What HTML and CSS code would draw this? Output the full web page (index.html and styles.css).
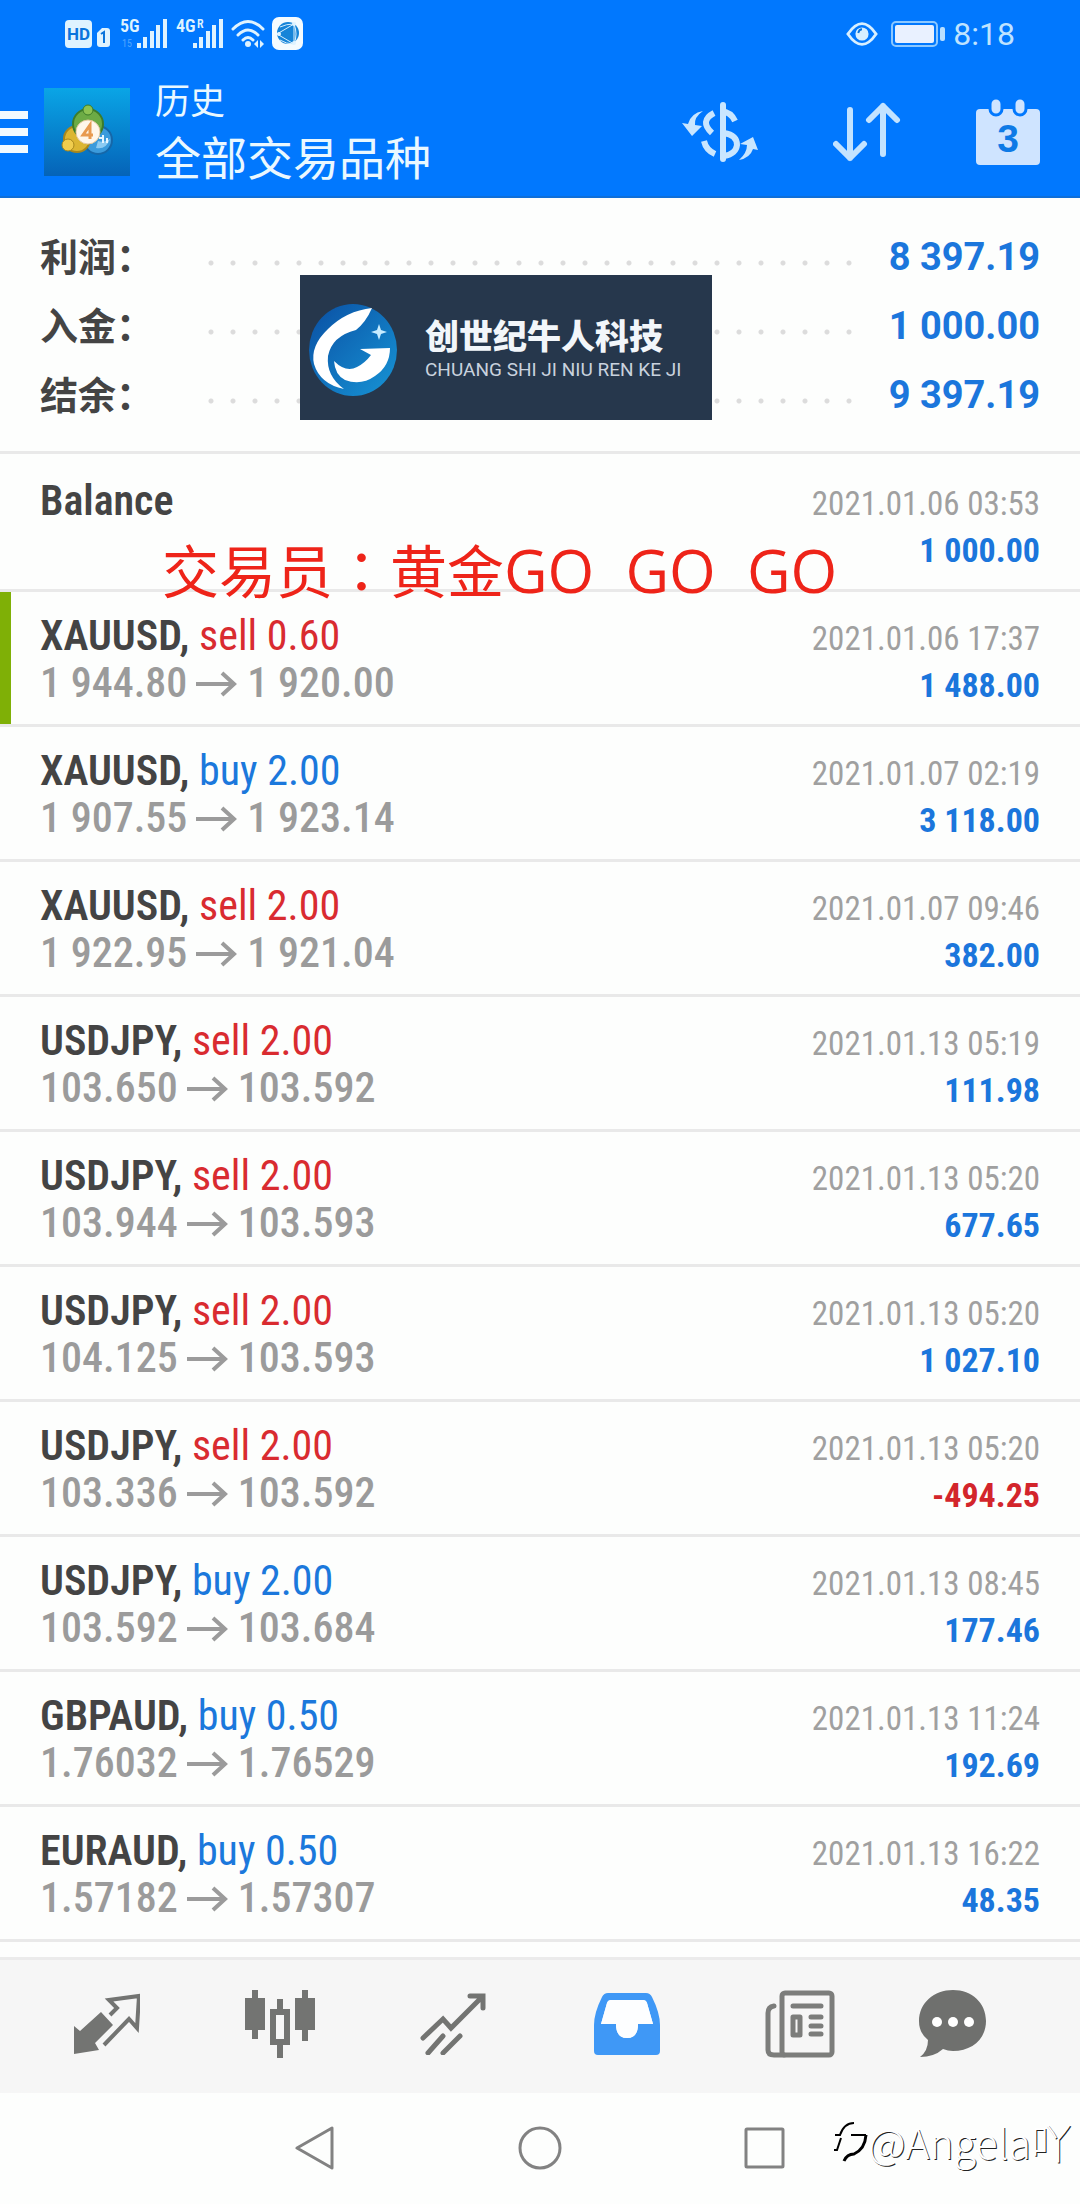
FILE: index.html
```html
<!DOCTYPE html>
<html lang="zh-CN">
<head>
<meta charset="utf-8">
<meta name="viewport" content="width=device-width, initial-scale=1">
<title>历史</title>
<link rel="stylesheet" href="styles.css">
</head>
<body>
<header class="top">
  <div class="status">
    <svg class="status-left" width="240" height="36" viewBox="65 16 240 36" fill="#dff3ff">
      <rect x="65" y="20" width="27" height="28" rx="4"/>
      <text x="67" y="40" font-size="17" font-weight="700" fill="#0a74dc">HD</text>
      <path d="M97 33l5-5h5q3 0 3 3v13q0 3-3 3h-7q-3 0-3-3z"/>
      <path d="M101 34l3-2v11" fill="none" stroke="#0a74dc" stroke-width="2"/>
      <text x="120" y="32" font-size="18" font-weight="600" class="cond">5G</text>
      <text x="122" y="47" font-size="10" class="cond" opacity=".35">15</text>
      <path d="M137 43h4v5h-4zM143 37h4v11h-4zM150 31h4v17h-4zM156 25h4v23h-4zM163 19h4v29h-4z"/>
      <text x="176" y="32" font-size="18" font-weight="600" class="cond">4G</text>
      <text x="197" y="28" font-size="12" font-weight="600" class="cond">R</text>
      <path d="M193 43h4v5h-4zM199 37h4v11h-4zM206 31h4v17h-4zM212 25h4v23h-4zM219 19h4v29h-4z"/>
      <path d="M233 29q15-15 30 0M238 35q10-10 20 0M243 40q5-5 10 0" fill="none" stroke="#dff3ff" stroke-width="3" stroke-linecap="round"/>
      <circle cx="248" cy="44" r="3"/>
      <path d="M254 44l4-4v8zM264 44l-4-4v8z"/>
      <rect x="272" y="17" width="31" height="33" rx="7" fill="#f4fbff"/>
      <circle cx="288" cy="33" r="11" fill="#1684d8"/>
      <path d="M277 34l17-10v20zM294 24q4 10 0 20M280 27q6-3 14-3M280 40q6 4 14 4" fill="none" stroke="#d5efff" stroke-width="1"/>
      <circle cx="294" cy="24" r="2"/><circle cx="294" cy="43" r="2"/><circle cx="279" cy="34" r="2"/>
    </svg>
    <div class="status-right">
      <svg width="32" height="26" viewBox="0 0 34 26">
        <path d="M2 13Q17-9 32 13Q17 35 2 13z" fill="none" stroke="#d8efff" stroke-width="3"/>
        <circle cx="17" cy="13" r="7" fill="#d8efff"/><path d="M13 12q1-4 4-4" fill="none" stroke="#0a74dc" stroke-width="2"/>
      </svg>
      <svg class="battery" width="54" height="26" viewBox="0 0 54 26">
        <rect x="1" y="1" width="45" height="24" rx="4" fill="none" stroke="#8cc8ff" stroke-width="2"/>
        <rect x="4" y="4" width="39" height="18" rx="2" fill="#e9f1ff"/>
        <rect x="49" y="6" width="5" height="14" rx="2" fill="#b9dfff"/>
      </svg>
      <time class="clock">8:18</time>
    </div>
  </div>
  <div class="appbar">
    <button class="icon-btn" aria-label="菜单">
      <svg width="28" height="42" viewBox="0 0 28 42" fill="#f2faff"><path d="M0 0h28v8H0zM0 17h28v8H0zM0 34h28v8H0z"/></svg>
    </button>
    <svg class="app-logo" width="86" height="88" viewBox="0 0 86 88">
      <defs><linearGradient id="sky" x1="0" y1="0" x2="0" y2="1"><stop offset="0" stop-color="#0aa5e6"/><stop offset=".5" stop-color="#0784cf"/><stop offset="1" stop-color="#0563b8"/></linearGradient></defs>
      <rect width="86" height="88" fill="url(#sky)"/>
      <circle cx="54" cy="52" r="14" fill="#3b9bdc" stroke="#1667a8" stroke-width="2"/>
      <circle cx="33" cy="51" r="13" fill="#dcb632" stroke="#a8871c" stroke-width="2"/>
      <circle cx="44" cy="36" r="15" fill="#6cab45" stroke="#3c7c2b" stroke-width="2"/>
      <circle cx="44" cy="22" r="5" fill="#8cc252" stroke="#3c7c2b"/>
      <circle cx="24" cy="57" r="6" fill="#f0cd4e" stroke="#a8871c"/>
      <path d="M52 60q10 2 14-9q-6 4-12 2z" fill="#8ccbf2"/>
      <circle cx="44" cy="44" r="12" fill="#fff6ea" stroke="#e3c9a0"/>
      <path d="M46 51v-14l-7 10h10" fill="none" stroke="#e89a50" stroke-width="3"/>
      <path d="M55 50h5M59 47v8M63 50v5" stroke="#e6f5ff" stroke-width="2"/>
    </svg>
    <h1 class="titles"><span class="title-small">历史</span><span class="title-big">全部交易品种</span></h1>
    <div class="actions">
      <button class="icon-btn" aria-label="货币">
        <svg width="76" height="60" viewBox="0 0 76 60">
          <g fill="none" stroke="#c9e6ff" stroke-width="6">
            <path d="M41 3v54" stroke-linecap="round"/>
            <path d="M53 19q-4-9-14-10M32 11q-15 8-2 20"/>
            <path d="M22 39q2 9 11 13M42 31q13 2 13 12q-1 9-13 11"/>
          </g>
          <path d="M21 9q-9 6-8 14l7 1l-10 10L0 21l6 1Q9 11 21 9zM57 58q8-7 8-15l-7-1L71 35l5 13l-5-1Q68 56 57 58z" fill="#c9e6ff"/>
        </svg>
      </button>
      <button class="icon-btn" aria-label="排序">
        <svg width="68" height="60" viewBox="0 0 68 60" fill="none" stroke="#c3e3ff" stroke-width="6" stroke-linecap="round" stroke-linejoin="round"><path d="M17 8v48M3 42l14 14l14-14M50 52V4M36 18L50 4l14 14"/></svg>
      </button>
      <button class="icon-btn" aria-label="日期">
        <svg width="64" height="66" viewBox="0 0 64 66">
          <rect x="0" y="10" width="64" height="56" rx="4" fill="#cfe4ff"/>
          <g fill="#cfe4ff" stroke="#0178fe" stroke-width="3"><rect x="14" y="-1" width="12" height="17" rx="6"/><rect x="38" y="-1" width="12" height="17" rx="6"/></g>
          <text x="32" y="53" text-anchor="middle" font-size="39" font-weight="600" fill="#0e7ae6">3</text>
        </svg>
      </button>
    </div>
  </div>
</header>

<main>
  <section class="summary">
    <dl class="totals">
      <div class="total"><dt>利润：</dt><dd>8 397.19</dd></div>
      <div class="total"><dt>入金：</dt><dd>1 000.00</dd></div>
      <div class="total"><dt>结余：</dt><dd>9 397.19</dd></div>
    </dl>
    <div class="brand">
      <svg width="94" height="96" viewBox="0 0 94 96">
        <defs><linearGradient id="orb" x1="0" y1="0" x2="1" y2="1"><stop offset="0" stop-color="#0a4fa3"/><stop offset="1" stop-color="#1795d6"/></linearGradient></defs>
        <ellipse cx="47" cy="50" rx="44" ry="46" fill="url(#orb)"/>
        <path d="M66 8Q40 11 22 29Q4 46 8 64Q14 84 38 89Q20 76 22 56Q26 36 50 30Q60 22 66 8z" fill="#fff"/>
        <path d="M54 49l30-1q0 18-15 28q-14 10-30 4q-10-5-11-19q12 12 23 6q8-4 14-12z" fill="#fff"/>
        <path d="M73 24l2 6l6 2l-6 2l-2 6l-2-6l-6-2l6-2z" fill="#c8ecff"/>
      </svg>
      <div class="brand-text"><strong class="brand-name">创世纪牛人科技</strong><span class="brand-latin">CHUANG SHI JI NIU REN KE JI</span></div>
    </div>
  </section>

  <section class="history">
    <p class="trader" lang="zh-Hant">交易员：黄金<span class="trader-latin">GO  GO  GO</span></p>
    <ul class="deals">
      <li class="deal deposit"><p class="symbol">Balance</p><time class="date">2021.01.06 03:53</time><p class="amount">1 000.00</p></li>
      <li class="deal marked"><p class="symbol">XAUUSD, <span class="sell">sell 0.60</span></p><time class="date">2021.01.06 17:37</time><p class="price">1 944.80<svg class="arrow" viewBox="0 0 42 26"><path d="M0 13h38M26 2l12 11l-12 11"/></svg>1 920.00</p><p class="amount">1 488.00</p></li>
      <li class="deal"><p class="symbol">XAUUSD, <span class="buy">buy 2.00</span></p><time class="date">2021.01.07 02:19</time><p class="price">1 907.55<svg class="arrow" viewBox="0 0 42 26"><path d="M0 13h38M26 2l12 11l-12 11"/></svg>1 923.14</p><p class="amount">3 118.00</p></li>
      <li class="deal"><p class="symbol">XAUUSD, <span class="sell">sell 2.00</span></p><time class="date">2021.01.07 09:46</time><p class="price">1 922.95<svg class="arrow" viewBox="0 0 42 26"><path d="M0 13h38M26 2l12 11l-12 11"/></svg>1 921.04</p><p class="amount">382.00</p></li>
      <li class="deal"><p class="symbol">USDJPY, <span class="sell">sell 2.00</span></p><time class="date">2021.01.13 05:19</time><p class="price">103.650<svg class="arrow" viewBox="0 0 42 26"><path d="M0 13h38M26 2l12 11l-12 11"/></svg>103.592</p><p class="amount">111.98</p></li>
      <li class="deal"><p class="symbol">USDJPY, <span class="sell">sell 2.00</span></p><time class="date">2021.01.13 05:20</time><p class="price">103.944<svg class="arrow" viewBox="0 0 42 26"><path d="M0 13h38M26 2l12 11l-12 11"/></svg>103.593</p><p class="amount">677.65</p></li>
      <li class="deal"><p class="symbol">USDJPY, <span class="sell">sell 2.00</span></p><time class="date">2021.01.13 05:20</time><p class="price">104.125<svg class="arrow" viewBox="0 0 42 26"><path d="M0 13h38M26 2l12 11l-12 11"/></svg>103.593</p><p class="amount">1 027.10</p></li>
      <li class="deal"><p class="symbol">USDJPY, <span class="sell">sell 2.00</span></p><time class="date">2021.01.13 05:20</time><p class="price">103.336<svg class="arrow" viewBox="0 0 42 26"><path d="M0 13h38M26 2l12 11l-12 11"/></svg>103.592</p><p class="amount loss">-494.25</p></li>
      <li class="deal"><p class="symbol">USDJPY, <span class="buy">buy 2.00</span></p><time class="date">2021.01.13 08:45</time><p class="price">103.592<svg class="arrow" viewBox="0 0 42 26"><path d="M0 13h38M26 2l12 11l-12 11"/></svg>103.684</p><p class="amount">177.46</p></li>
      <li class="deal"><p class="symbol">GBPAUD, <span class="buy">buy 0.50</span></p><time class="date">2021.01.13 11:24</time><p class="price">1.76032<svg class="arrow" viewBox="0 0 42 26"><path d="M0 13h38M26 2l12 11l-12 11"/></svg>1.76529</p><p class="amount">192.69</p></li>
      <li class="deal"><p class="symbol">EURAUD, <span class="buy">buy 0.50</span></p><time class="date">2021.01.13 16:22</time><p class="price">1.57182<svg class="arrow" viewBox="0 0 42 26"><path d="M0 13h38M26 2l12 11l-12 11"/></svg>1.57307</p><p class="amount">48.35</p></li>
    </ul>
  </section>
</main>

<nav class="tabs">
  <button class="tab" aria-label="行情">
    <svg width="66" height="62" viewBox="0 0 66 62">
      <path d="M0 33l6 5L27 19l12 13L21 50l4 7l-25 4z" fill="#737472"/>
      <path d="M30 52L55 26l8 9l2-32l-30 4l8 8l-7 7" fill="none" stroke="#737472" stroke-width="4"/>
    </svg>
  </button>
  <button class="tab" aria-label="图表">
    <svg width="70" height="68" viewBox="0 0 70 68" fill="#737472">
      <path d="M7 0h6v8h7v32h-7v9H7v-9H0V8h7zM57 0h6v8h7v32h-7v11h-6V40h-7V8h7z"/>
      <path fill-rule="evenodd" d="M32 9h6v10h7v36h-7v13h-6V55h-7V19h7zM31 25v24h8V25z"/>
    </svg>
  </button>
  <button class="tab" aria-label="交易">
    <svg width="66" height="62" viewBox="0 0 66 62" fill="none" stroke="#737472" stroke-width="5" stroke-linecap="round"><path d="M3 45l20-19l8 9L62 4M50 3h13v12M8 60l15-17M23 60l17-17"/></svg>
  </button>
  <button class="tab" aria-label="历史" aria-current="page">
    <svg width="66" height="62" viewBox="0 0 66 62" fill="#3f98f6" fill-rule="evenodd"><path d="M14 0h38q4 0 6 4q8 16 8 28v26q0 4-4 4H4q-4 0-4-4V32Q0 20 8 4q2-4 6-4zM17 7q-3 0-4 3L7 31h15q0 14 11 14t11-14h15L53 10q-1-3-4-3z"/><path d="M17 7h32q3 0 4 3l6 21H44q0 14-11 14T22 31H7l6-21q1-3 4-3z" fill="#fdfeff"/></svg>
  </button>
  <button class="tab" aria-label="新闻">
    <svg width="70" height="68" viewBox="0 0 70 68" fill="none" stroke="#7c7d7b" stroke-width="5" stroke-linecap="round" stroke-linejoin="round"><rect x="17" y="3" width="50" height="62" rx="3"/><path d="M9 16q-6 1-6 7v37q0 5 6 5h10M28 16h28M28 27h7v18h-7zM46 27h10M46 36h10M46 44h10"/></svg>
  </button>
  <button class="tab" aria-label="聊天">
    <svg width="68" height="68" viewBox="0 0 68 68"><path d="M34 0C53 0 67 13 67 31S53 61 34 61q-5 0-10-2Q15 67 1 67Q9 61 9 50Q0 43 0 31C0 13 15 0 34 0z" fill="#6f706e"/><g fill="#fff"><circle cx="18" cy="32" r="5"/><circle cx="34" cy="32" r="5"/><circle cx="50" cy="32" r="5"/></g></svg>
  </button>
</nav>

<footer class="sysnav">
  <button class="icon-btn" aria-label="返回"><svg width="44" height="44" viewBox="0 0 44 44" fill="none" stroke="#828282" stroke-width="3" stroke-linejoin="round"><path d="M3 22L38 2v40z"/></svg></button>
  <button class="icon-btn" aria-label="主屏幕"><svg width="44" height="44" viewBox="0 0 44 44" fill="none" stroke="#828282" stroke-width="3"><circle cx="22" cy="22" r="20"/></svg></button>
  <button class="icon-btn" aria-label="最近任务"><svg width="44" height="44" viewBox="0 0 44 44" fill="none" stroke="#828282" stroke-width="3"><rect x="4" y="3" width="37" height="38" rx="1"/></svg></button>
  <p class="watermark">
    <svg width="36" height="44" viewBox="0 0 36 44" fill="none" stroke="#000" stroke-width="2"><path d="M3 16h5Q12 4 22 4M19 16h15M2 31h3l4-12"/><path d="M34 16q-1 14-12 19q-7 0-10 7" stroke-width="3"/></svg>
    <span>@Angela吖</span>
  </p>
</footer>
</body>
</html>
```
FILE: styles.css
```css
* { box-sizing: border-box; }

body {
  margin: 0;
  background: #fdfefd;
  color: #444;
  font-family: Roboto, "Noto Sans CJK SC", sans-serif;
}

h1, p, ul, dl, dd { margin: 0; padding: 0; }
ul { list-style: none; }
svg { display: block; flex: none; }

button {
  display: flex;
  align-items: center;
  justify-content: center;
  padding: 0;
  border: 0;
  background: none;
}

.cond { font-family: "Roboto Condensed", Roboto, sans-serif; }

/* Header */
.top {
  background: #0178fe;
  border-bottom: 2px solid #0f6fd8;
}
.status {
  display: flex;
  justify-content: space-between;
  align-items: center;
  height: 68px;
  padding: 0 65px;
}
.status-right {
  display: flex;
  align-items: center;
}
.battery { margin: 0 8px 0 13px; }
.clock {
  color: #bfe3ff;
  font-size: 32px;
  line-height: 36px;
}
.appbar {
  display: flex;
  align-items: center;
  height: 128px;
  padding-right: 40px;
}
.app-logo { margin: 0 25px 0 16px; }
.titles {
  display: flex;
  flex-direction: column;
  padding-top: 6px;
  color: #eaf8ff;
  font-weight: 400;
}
.title-small { font-size: 35px; line-height: 48px; }
.title-big { font-size: 46px; line-height: 64px; }
.actions {
  display: flex;
  align-items: center;
  gap: 75px;
  margin-left: auto;
}

/* Account summary */
.summary {
  position: relative;
  padding: 24px 40px 22px;
  border-bottom: 3px solid #e9e9e9;
}
.total {
  display: flex;
  align-items: center;
  height: 69px;
}
.total dt {
  width: 168px;
  padding-bottom: 5px;
  font-size: 38px;
  font-weight: 700;
}
.total dd {
  flex: 1;
  color: #1b76dc;
  font-size: 38px;
  font-weight: 700;
  text-align: right;
  display: flex;
  align-items: center;
  justify-content: space-between;
}
.total dd::before {
  content: "";
  flex: 1;
  height: 6px;
  margin: 12px 30px 0 0;
  background: radial-gradient(circle at 3px 3px, #dcdcdc 2px, transparent 3px) 0 0 / 22px 6px repeat-x;
}
.brand {
  position: absolute;
  top: 77px;
  left: 50%;
  display: flex;
  align-items: center;
  gap: 25px;
  width: 412px;
  height: 145px;
  margin-left: -240px;
  padding: 0 6px;
  background: #26374c;
}
.brand-text {
  display: flex;
  flex-direction: column;
  padding-top: 4px;
  color: #f2f6fa;
  white-space: nowrap;
}
.brand-name { font-size: 34px; font-weight: 900; line-height: 40px; }
.brand-latin { color: #c9d2de; font-size: 19px; line-height: 26px; }

/* Deal history */
.history { position: relative; }
.trader {
  position: absolute;
  top: 74px;
  left: 162px;
  color: #ee2419;
  font-family: "Noto Sans CJK TC", sans-serif;
  font-size: 57px;
  line-height: 80px;
  white-space: pre;
}
.trader-latin { font-family: "Open Sans", sans-serif; font-size: 60px; line-height: 60px; }
.deal {
  display: grid;
  grid-template-columns: 1fr auto;
  grid-template-rows: 47px 47px;
  align-items: baseline;
  padding: 20px 40px 18px;
  border-bottom: 3px solid #e9e9e9;
  font-family: "Roboto Condensed", Roboto, sans-serif;
  line-height: 47px;
}
.deposit { padding-top: 23px; }
.marked { box-shadow: inset 11px 0 #7fb006; }
.symbol { font-size: 42px; font-weight: 600; }
.symbol span { font-weight: 400; }
.sell { color: #d92b30; }
.buy { color: #1b78dc; }
.price {
  color: #9b9b9b;
  font-size: 42px;
  font-weight: 500;
}
.arrow {
  display: inline-block;
  width: 42px;
  height: 26px;
  margin: 0 9px;
  fill: none;
  stroke: #9b9b9b;
  stroke-width: 4;
}
.date { color: #a0a0a0; font-size: 33px; }
.amount {
  grid-column: 2;
  color: #1b76dc;
  font-size: 34px;
  font-weight: 700;
  text-align: right;
}
.amount::before { content: "\200b"; font-size: 42px; }
.loss { color: #d3252b; }

/* Bottom tabs */
.tabs {
  display: grid;
  grid-template-columns: repeat(5, 173fr) 133fr;
  height: 136px;
  margin-top: 15px;
  padding: 0 60px 6px 20px;
  background: #f6f6f6;
  border-top: 3px solid #ebebeb;
}

/* System navigation */
.sysnav {
  position: relative;
  display: flex;
  justify-content: center;
  align-items: center;
  gap: 180px;
  height: 110px;
}
.watermark {
  position: absolute;
  top: 18px;
  right: 8px;
  display: flex;
  align-items: center;
  color: #fff;
  font-family: "Noto Sans CJK SC", sans-serif;
  font-size: 41px;
  font-weight: 300;
  line-height: 60px;
  text-shadow: 1px 1px 0 #222;
}
```
